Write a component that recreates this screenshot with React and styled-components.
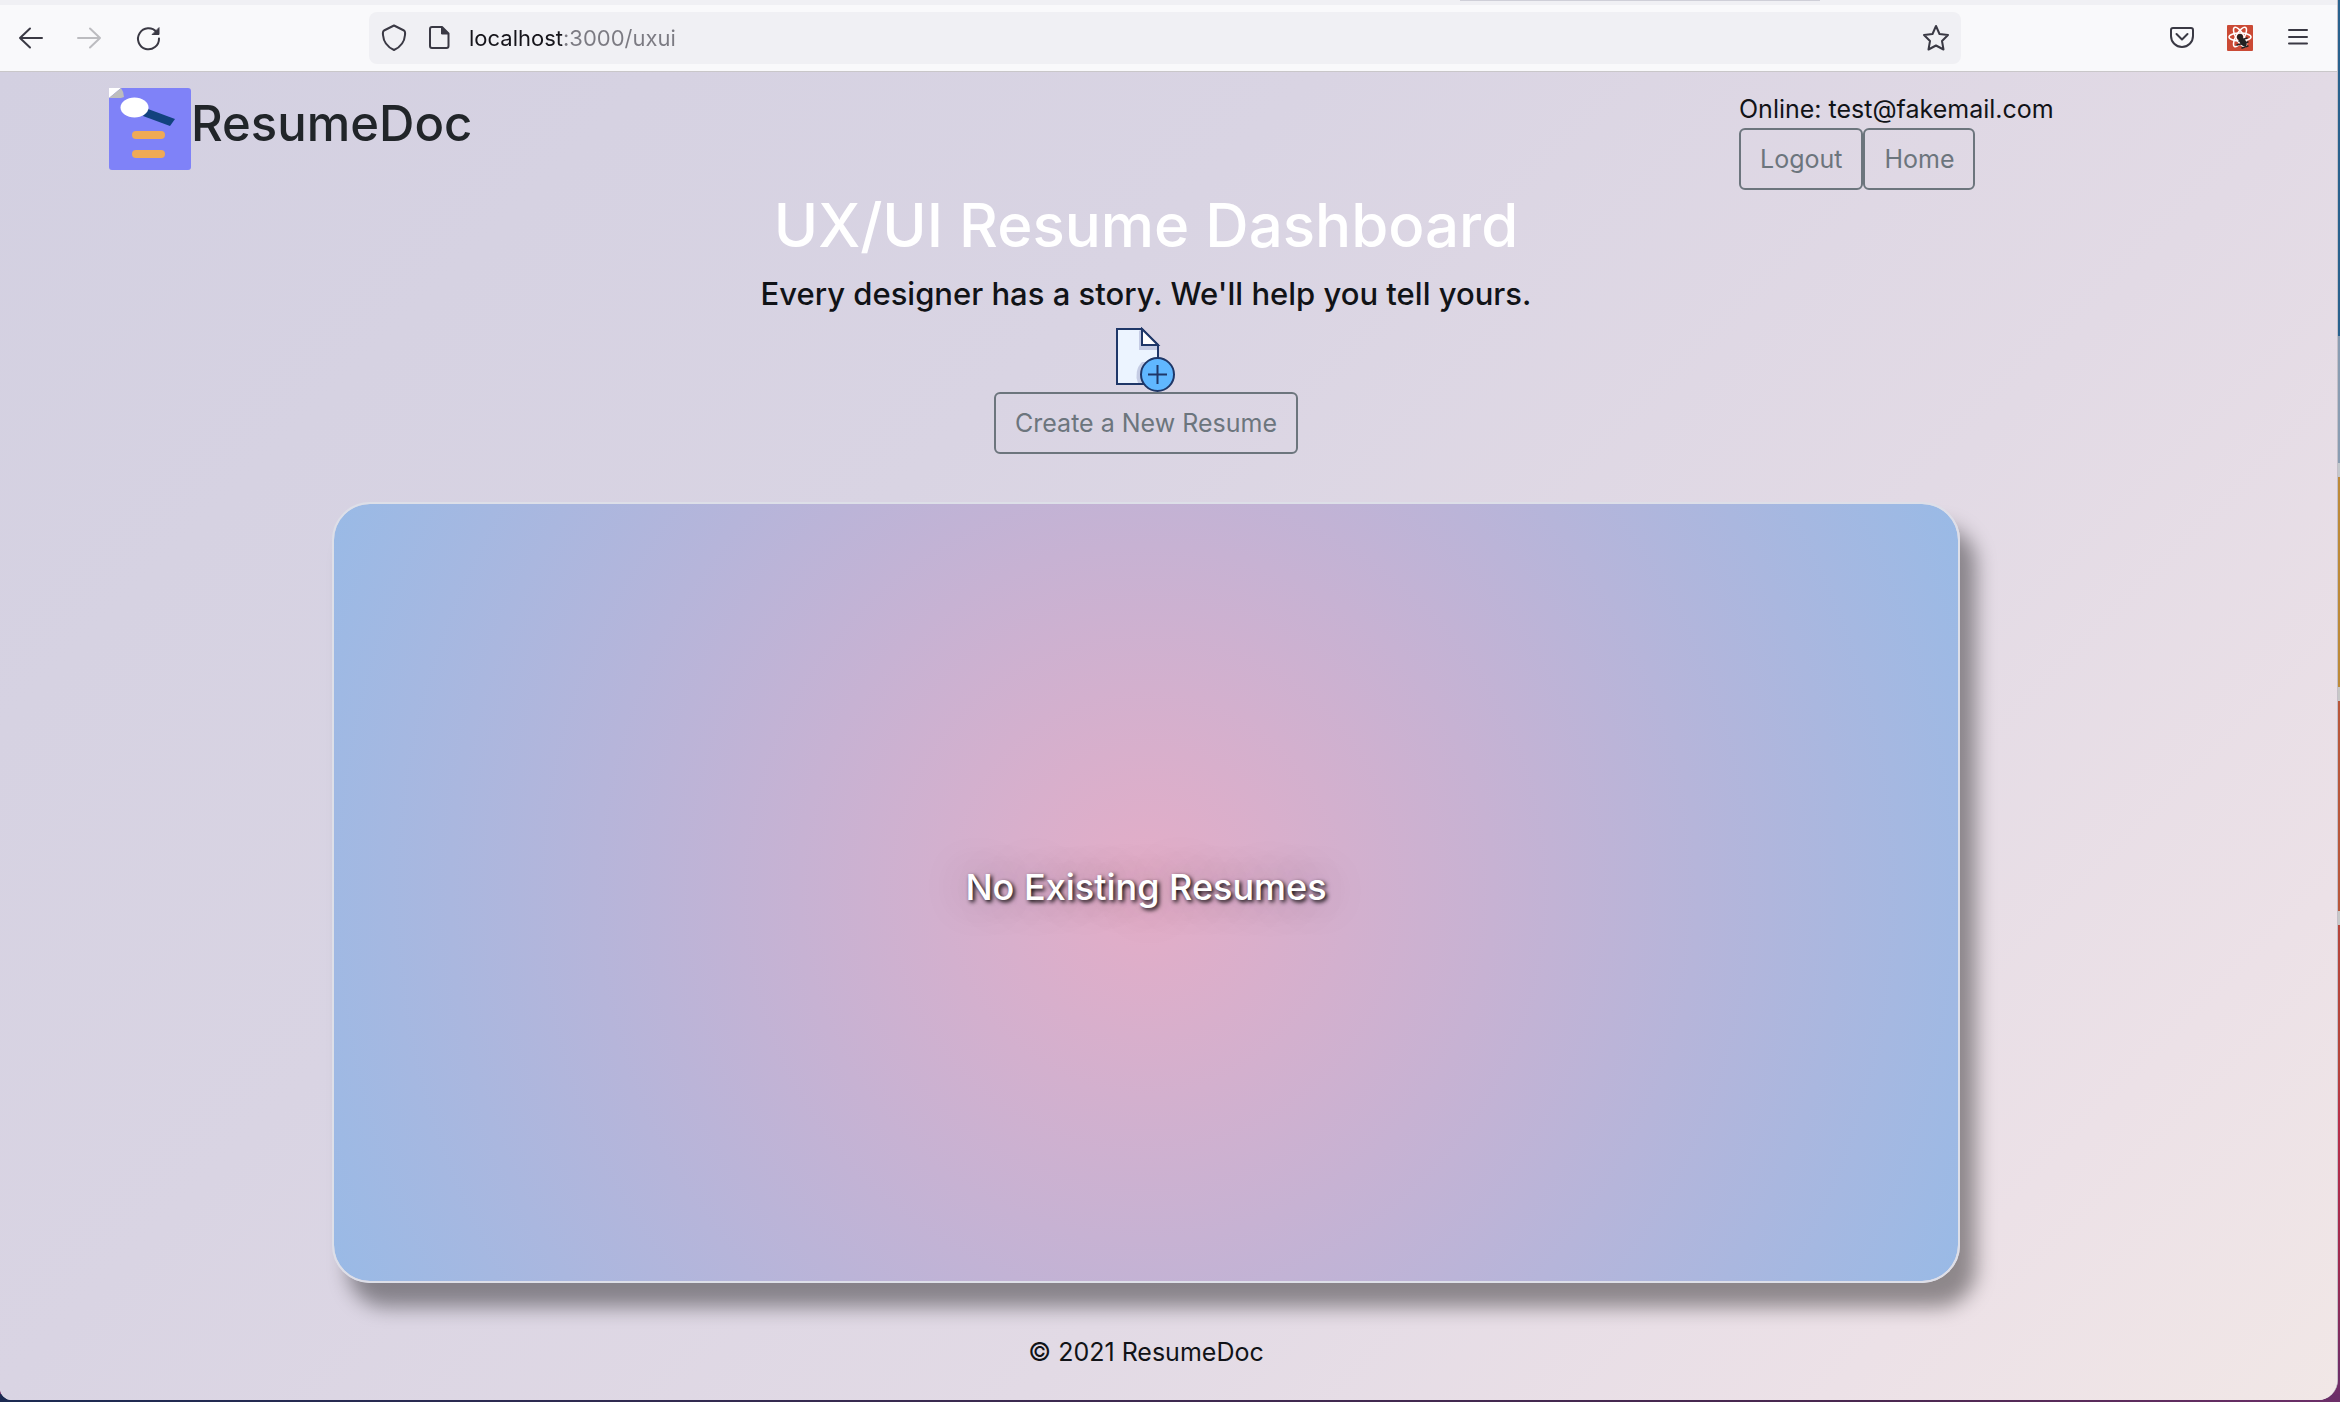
import React from "react";
import styled, { createGlobalStyle } from "styled-components";

const GlobalStyle = createGlobalStyle`
  * { box-sizing: border-box; }
  body { margin: 0; font-family: Inter, "Liberation Sans", sans-serif; color: #212529; }
  h1, h2, h3, p { margin: 0; font-weight: 500; }
`;

const Desktop = styled.div`
  min-height: 100vh;
  display: flex;
  padding: 0 2px 2px 0;
  background:
    linear-gradient(90deg, #1c2a52, #3a2a50 40%, #4a2850 80%, #6c2f68) bottom / 100% 8px no-repeat,
    linear-gradient(
      #2a628e 0 24%, #8a9db2 24% 33%, #c4c8cc 33% 34%, #bd8a3a 34% 49%,
      #c8c8c8 49% 50%, #b8583c 50% 65%, #c8c8c8 65% 66%, #b5463c 66% 76%,
      #b8304a 80%, #a02c50 90%, #702f68 98%
    );
`;

const BrowserWindow = styled.div`
  flex: 1;
  display: flex;
  flex-direction: column;
  overflow: hidden;
  border-right: 1px solid #c4c0c8;
  border-radius: 0 0 20px 12px;
  background: #f9f9fb;
`;

const TabStrip = styled.div`
  height: 5px;
  background: #f0f0f4;
`;

const ActiveTab = styled.div`
  width: 360px;
  height: 1px;
  margin-left: 1460px;
  background: #cfcfd8;
`;

const Toolbar = styled.nav`
  display: flex;
  align-items: center;
  height: 67px;
  padding: 0 24px 0 16px;
  border-bottom: 1px solid #c9c7c9;
`;

const ToolGroup = styled.div`
  display: flex;
  align-items: center;
  justify-content: ${(p) => (p.$end ? "flex-end" : "flex-start")};
  gap: 28px;
  width: ${(p) => (p.$end ? "352px" : "353px")};
`;

const ToolButton = styled.button`
  display: flex;
  padding: 0;
  border: 0;
  background: none;
  color: ${(p) => (p.$muted ? "#bcbcc0" : "#3a3944")};
`;

const AddressBar = styled.div`
  flex: 1;
  display: flex;
  align-items: center;
  gap: 15px;
  height: 52px;
  padding: 0 10px;
  border-radius: 8px;
  background: #f0f0f4;
`;

const AddressInput = styled.input`
  flex: 1;
  padding: 0;
  border: 0;
  outline: 0;
  font: 400 22px/30px Inter, sans-serif;
  color: #15141a;
  background: linear-gradient(90deg, #15141a 95px, #7b7a82 95px);
  background-clip: text;
  -webkit-text-fill-color: transparent;
`;

const Page = styled.div`
  flex: 1;
  display: flex;
  flex-direction: column;
  background: linear-gradient(135deg, #d3d0e1, #d9d4e3 36%, #e2dae5 64%, #ece1e7 86%, #f1e7e6);
`;

const Header = styled.header`
  display: flex;
  justify-content: space-between;
  height: 119px;
  padding: 16px 284px 0 109px;
`;

const Brand = styled.a`
  display: flex;
  align-items: flex-start;
  color: inherit;
  text-decoration: none;
`;

const BrandName = styled.h1`
  font-size: 49px;
  line-height: 72px;
`;

const Account = styled.div`
  width: 314px;
  padding-top: 2px;
`;

const AccountText = styled.p`
  font-size: 25px;
  font-weight: 400;
  line-height: 38px;
  color: #111317;
  white-space: nowrap;
`;

const ButtonRow = styled.div`
  display: flex;
`;

const OutlineButton = styled.button`
  height: 62px;
  padding: 0 19px;
  border: 2px solid #6c757d;
  border-radius: 6px;
  background: transparent;
  color: #6c757d;
  font: 400 25px/38px Inter, sans-serif;
`;

const Main = styled.main`
  flex: 1;
  display: flex;
  flex-direction: column;
  align-items: center;
  padding: 0 377px 0 332px;
`;

const Title = styled.h2`
  font-size: 60px;
  line-height: 68px;
  color: #fff;
`;

const Tagline = styled.h3`
  font-size: 31px;
  font-weight: 450;
  line-height: 38px;
  margin: 16px 0 14px;
  color: #111317;
`;

const EmptyCard = styled.section`
  flex: 1;
  align-self: stretch;
  display: flex;
  align-items: center;
  justify-content: center;
  min-height: 400px;
  margin-top: 48px;
  padding-bottom: 12px;
  border: 2px solid #dddfe8;
  border-radius: 38px;
  background: radial-gradient(circle, #e4adc7 0%, #99bae6 100%);
  background-clip: padding-box;
  box-shadow: 16px 24px 20px rgba(0, 0, 0, 0.4);
`;

const EmptyText = styled.p`
  font-size: 36px;
  line-height: 46px;
  color: #fff;
  text-shadow: 2px 2px 4px #000, 0 0 40px rgba(60, 40, 60, 0.4);
`;

const Footer = styled.footer`
  padding: 50px 45px 29px 0;
  font-size: 25px;
  line-height: 38px;
  text-align: center;
  color: #111317;
`;

const Glyph = ({ size = 30, children, ...rest }) => (
  <svg width={size} height={size} viewBox="0 0 30 30" fill="none" stroke="currentColor" strokeWidth="2" strokeLinecap="round" strokeLinejoin="round" aria-hidden="true" {...rest}>
    {children}
  </svg>
);

const Logo = () => (
  <svg width="82" height="82" viewBox="0 0 82 82" aria-hidden="true">
    <rect width="82" height="82" rx="3" fill="#7f82f8" />
    <path d="M0 0H12L0 10Z" fill="#fff" />
    <path d="M0 10 12 0Q15 4 15 9L12 10Z" fill="#bdbdbd" />
    <path d="M39 21 66 31 61 38 34 28Z" fill="#12427e" />
    <ellipse cx="25.500" cy="19.500" rx="14" ry="10" fill="#fff" />
    <rect x="23" y="43" width="33" height="8" rx="4" fill="#f0aa55" />
    <rect x="23" y="62" width="33" height="8" rx="4" fill="#f0aa55" />
  </svg>
);

const NewDocument = () => (
  <svg width="60" height="65" viewBox="0 0 60 65" aria-hidden="true">
    <path d="M1 2H26L42 18V57H1Z" fill="#ecf4ff" />
    <path d="M23 4V23H42V18L26 2Z" fill="#c5cce4" />
    <path d="M26 35A19 19 0 0 0 22 56H30V35Z" fill="#c5cce4" />
    <path d="M1 2H26L42 18V57H1Z" fill="none" stroke="#1f3768" strokeWidth="2" />
    <path d="M26 2V18H42Z" fill="#fff" stroke="#1f3768" strokeWidth="2" />
    <circle cx="41.500" cy="47.500" r="16.500" fill="#60b7ff" stroke="#1f3768" strokeWidth="2" />
    <path d="M32 47.500H51M41.500 38V57" stroke="#1f3768" strokeWidth="2" />
  </svg>
);

export default function App() {
  return (
    <Desktop>
      <GlobalStyle />
      <BrowserWindow>
        <TabStrip><ActiveTab /></TabStrip>
        <Toolbar>
          <ToolGroup>
            <ToolButton aria-label="Back">
              <Glyph><path d="M26 15H4M14 5.500 4 15 14 24.500" /></Glyph>
            </ToolButton>
            <ToolButton aria-label="Forward" $muted>
              <Glyph><path d="M4 15H26M16 5.500 26 15 16 24.500" /></Glyph>
            </ToolButton>
            <ToolButton aria-label="Reload">
              <Glyph>
                <path d="M24.500 9A10.500 10.500 0 1 0 27 15.500" />
                <path d="M27 5V11.500H20.500Z" fill="currentColor" strokeWidth="1" />
              </Glyph>
            </ToolButton>
          </ToolGroup>
          <AddressBar>
            <ToolButton aria-label="Tracking protection">
              <Glyph><path d="M15 2.500 25 7.500Q26.500 8.500 26 12C25.500 19 21.500 24 15 27C8.500 24 4.500 19 4 12Q3.500 8.500 5 7.500Z" /></Glyph>
            </ToolButton>
            <ToolButton aria-label="Site information">
              <Glyph>
                <path d="M8 4H18L24.500 10.500V23Q24.500 25 22.500 25H8Q6 25 6 23V6Q6 4 8 4Z" />
                <path d="M17.500 4V11H24.500Z" fill="currentColor" strokeWidth="1" />
              </Glyph>
            </ToolButton>
            <AddressInput aria-label="Address" defaultValue="localhost:3000/uxui" />
            <ToolButton aria-label="Bookmark">
              <Glyph><path d="M15 3 18.500 11 27 12 21 18 22.500 26.500 15 22.500 7.500 26.500 9 18 3 12 11.500 11Z" /></Glyph>
            </ToolButton>
          </AddressBar>
          <ToolGroup $end>
            <ToolButton aria-label="Pocket">
              <Glyph>
                <path d="M6 5H24Q26 5 26 7V13A11 11 0 0 1 4 13V7Q4 5 6 5Z" />
                <path d="M9.500 11 15 16.500 20.500 11" />
              </Glyph>
            </ToolButton>
            <ToolButton aria-label="React developer tools">
              <Glyph>
                <rect x="2" y="2" width="26" height="26" rx="1" fill="#cb4a35" stroke="none" />
                <g stroke="#fff" strokeWidth="1.500">
                  <ellipse cx="15" cy="14" rx="11" ry="4" />
                  <ellipse cx="15" cy="14" rx="11" ry="4" transform="rotate(60 15 14)" />
                  <ellipse cx="15" cy="14" rx="11" ry="4" transform="rotate(120 15 14)" />
                </g>
                <circle cx="15" cy="14" r="3" fill="#222" stroke="none" />
                <ellipse cx="18" cy="19" rx="3" ry="5" transform="rotate(-35 18 19)" fill="#222" stroke="none" />
                <path d="M14 18 22 15M12 22 23 19M17 25 23 23" stroke="#222" strokeWidth="1.500" />
              </Glyph>
            </ToolButton>
            <ToolButton aria-label="Menu">
              <Glyph><path d="M6 7H24M6 14H24M6 20.500H24" /></Glyph>
            </ToolButton>
          </ToolGroup>
        </Toolbar>
        <Page>
          <Header>
            <Brand href="#">
              <Logo />
              <BrandName>ResumeDoc</BrandName>
            </Brand>
            <Account>
              <AccountText>Online: test@fakemail.com</AccountText>
              <ButtonRow>
                <OutlineButton>Logout</OutlineButton>
                <OutlineButton>Home</OutlineButton>
              </ButtonRow>
            </Account>
          </Header>
          <Main>
            <Title>UX/UI Resume Dashboard</Title>
            <Tagline>Every designer has a story. We'll help you tell yours.</Tagline>
            <NewDocument />
            <OutlineButton>Create a New Resume</OutlineButton>
            <EmptyCard>
              <EmptyText>No Existing Resumes</EmptyText>
            </EmptyCard>
          </Main>
          <Footer>© 2021 ResumeDoc</Footer>
        </Page>
      </BrowserWindow>
    </Desktop>
  );
}
